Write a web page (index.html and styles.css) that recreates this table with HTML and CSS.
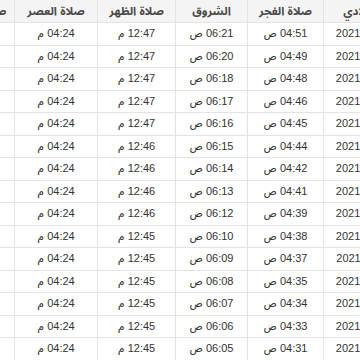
FILE: index.html
```html
<!DOCTYPE html>
<html lang="ar">
<head>
<meta charset="utf-8">
<link rel="stylesheet" href="styles.css">
</head>
<body>
<div class="viewport">
<table class="times" dir="rtl">
<thead>
<tr><th class="c-date">الميلادي</th><th class="c-fajr">صلاة الفجر</th><th class="c-sun">الشروق</th><th class="c-dhuhr">صلاة الظهر</th><th class="c-asr">صلاة العصر</th><th class="c-magh">صلاة المغرب</th><th class="c-isha">صلاة العشاء</th></tr>
</thead>
<tbody>
<tr><td>2021-03-01</td><td>04:51 ص</td><td>06:21 ص</td><td>12:47 م</td><td>04:24 م</td><td>07:04 م</td><td>08:25 م</td></tr>
<tr><td>2021-03-02</td><td>04:49 ص</td><td>06:20 ص</td><td>12:47 م</td><td>04:24 م</td><td>07:05 م</td><td>08:26 م</td></tr>
<tr><td>2021-03-03</td><td>04:48 ص</td><td>06:18 ص</td><td>12:47 م</td><td>04:24 م</td><td>07:06 م</td><td>08:27 م</td></tr>
<tr><td>2021-03-04</td><td>04:46 ص</td><td>06:17 ص</td><td>12:47 م</td><td>04:24 م</td><td>07:07 م</td><td>08:28 م</td></tr>
<tr><td>2021-03-05</td><td>04:45 ص</td><td>06:16 ص</td><td>12:47 م</td><td>04:24 م</td><td>07:08 م</td><td>08:29 م</td></tr>
<tr><td>2021-03-06</td><td>04:44 ص</td><td>06:15 ص</td><td>12:46 م</td><td>04:24 م</td><td>07:09 م</td><td>08:30 م</td></tr>
<tr><td>2021-03-07</td><td>04:42 ص</td><td>06:14 ص</td><td>12:46 م</td><td>04:24 م</td><td>07:10 م</td><td>08:31 م</td></tr>
<tr><td>2021-03-08</td><td>04:41 ص</td><td>06:13 ص</td><td>12:46 م</td><td>04:24 م</td><td>07:11 م</td><td>08:32 م</td></tr>
<tr><td>2021-03-09</td><td>04:39 ص</td><td>06:12 ص</td><td>12:46 م</td><td>04:24 م</td><td>07:12 م</td><td>08:33 م</td></tr>
<tr><td>2021-03-10</td><td>04:38 ص</td><td>06:10 ص</td><td>12:45 م</td><td>04:24 م</td><td>07:13 م</td><td>08:34 م</td></tr>
<tr><td>2021-03-11</td><td>04:37 ص</td><td>06:09 ص</td><td>12:45 م</td><td>04:24 م</td><td>07:14 م</td><td>08:35 م</td></tr>
<tr><td>2021-03-12</td><td>04:35 ص</td><td>06:08 ص</td><td>12:45 م</td><td>04:24 م</td><td>07:15 م</td><td>08:36 م</td></tr>
<tr><td>2021-03-13</td><td>04:34 ص</td><td>06:07 ص</td><td>12:45 م</td><td>04:24 م</td><td>07:16 م</td><td>08:37 م</td></tr>
<tr><td>2021-03-14</td><td>04:33 ص</td><td>06:06 ص</td><td>12:45 م</td><td>04:24 م</td><td>07:17 م</td><td>08:38 م</td></tr>
<tr><td>2021-03-15</td><td>04:31 ص</td><td>06:05 ص</td><td>12:45 م</td><td>04:24 م</td><td>07:18 م</td><td>08:39 م</td></tr>
</tbody>
</table>
</div>
</body>
</html>
```
FILE: styles.css
```css
html, body {
  margin: 0;
  padding: 0;
  background: #ffffff;
}
.viewport {
  width: 360px;
  height: 360px;
  overflow: hidden;
}
.times {
  border-collapse: collapse;
  table-layout: fixed;
  width: 545px;
  margin-left: -148px;
  margin-top: -1px;
  font-family: "Liberation Sans", "DejaVu Sans", sans-serif;
  font-size: 11px;
  color: #333333;
}
.times th,
.times td {
  border: 1px solid #e3e3e3;
  padding: 0;
  text-align: center;
  white-space: nowrap;
  overflow: hidden;
}
.times th {
  background: #f4f4f4;
  color: #4a4a4a;
  font-family: "Liberation Sans", "Noto Sans Arabic", "DejaVu Sans", sans-serif;
  font-size: 11.5px;
  font-weight: bold;
  line-height: 22px;
}
.times td {
  line-height: 21.5px;
}
.c-date { width: 80px; }
.c-fajr { width: 75px; }
.c-sun { width: 71px; }
.c-dhuhr { width: 77px; }
.c-asr { width: 82px; }
.c-magh { width: 80px; }
.c-isha { width: 80px; }
```
